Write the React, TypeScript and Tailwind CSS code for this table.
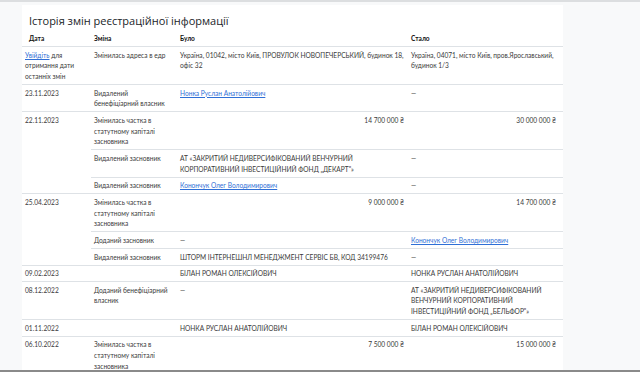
import React from 'react'

type Sub = { change: string; was: React.ReactNode; now: React.ReactNode; wasRight?: boolean; nowRight?: boolean }
type Row = { date: React.ReactNode; subs: Sub[] }

const Link = ({ children }: { children: React.ReactNode }) => (
  <a className="text-[#2f6fd6] underline underline-offset-1">{children}</a>
)

const DASH = '—'

const rows: Row[] = [
  {
    date: <><Link>Увійдіть</Link> для отримання дати останніх змін</>,
    subs: [{
      change: 'Змінилась адреса в едр',
      was: 'Україна, 01042, місто Київ, ПРОВУЛОК НОВОПЕЧЕРСЬКИЙ, будинок 18, офіс 32',
      now: 'Україна, 04071, місто Київ, пров.Ярославський, будинок 1/3',
    }],
  },
  {
    date: '23.11.2023',
    subs: [{ change: 'Видалений бенефіціарний власник', was: <Link>Нонка Руслан Анатолійович</Link>, now: DASH }],
  },
  {
    date: '22.11.2023',
    subs: [
      { change: 'Змінилась частка в статутному капіталі засновника', was: '14 700 000 ₴', now: '30 000 000 ₴', wasRight: true, nowRight: true },
      { change: 'Видалений засновник', was: 'АТ «ЗАКРИТИЙ НЕДИВЕРСИФІКОВАНИЙ ВЕНЧУРНИЙ КОРПОРАТИВНИЙ ІНВЕСТИЦІЙНИЙ ФОНД „ДЕКАРТ"»', now: DASH },
      { change: 'Видалений засновник', was: <Link>Конончук Олег Володимирович</Link>, now: DASH },
    ],
  },
  {
    date: '25.04.2023',
    subs: [
      { change: 'Змінилась частка в статутному капіталі засновника', was: '9 000 000 ₴', now: '14 700 000 ₴', wasRight: true, nowRight: true },
      { change: 'Доданий засновник', was: DASH, now: <Link>Конончук Олег Володимирович</Link> },
      { change: 'Видалений засновник', was: 'ШТОРМ ІНТЕРНЕШНЛ МЕНЕДЖМЕНТ СЕРВІС БВ, КОД 34199476', now: DASH },
    ],
  },
  { date: '09.02.2023', subs: [{ change: '', was: 'БІЛАН РОМАН ОЛЕКСІЙОВИЧ', now: 'НОНКА РУСЛАН АНАТОЛІЙОВИЧ' }] },
  {
    date: '08.12.2022',
    subs: [{ change: 'Доданий бенефіціарний власник', was: DASH, now: 'АТ «ЗАКРИТИЙ НЕДИВЕРСИФІКОВАНИЙ ВЕНЧУРНИЙ КОРПОРАТИВНИЙ ІНВЕСТИЦІЙНИЙ ФОНД „БЕЛЬФОР"»' }],
  },
  { date: '01.11.2022', subs: [{ change: '', was: 'НОНКА РУСЛАН АНАТОЛІЙОВИЧ', now: 'БІЛАН РОМАН ОЛЕКСІЙОВИЧ' }] },
  {
    date: '06.10.2022',
    subs: [{ change: 'Змінилась частка в статутному капіталі засновника', was: '7 500 000 ₴', now: '15 000 000 ₴', wasRight: true, nowRight: true }],
  },
]

export default function App(){
  const td = 'align-top py-[2.5px] pl-[3px] border-b border-[#dee2e6]'
  return (
    <div className="h-[372px] overflow-hidden bg-[#f8f9fa] border-t-2 border-[#dcdee0] relative">
      <div className="ml-[22px] mt-[3px] w-[541px] bg-white pt-[8px]">
        <h2 className="pl-[7px] text-[11px] leading-[15px] text-[#212529] mb-[2.5px] font-['Open_Sans',sans-serif]">Історія змін реєстраційної інформації</h2>
        <table className="w-full table-fixed border-collapse text-[6.6px] leading-[10.65px] text-[#3a3a3a] font-['Lato','Noto_Sans',sans-serif]">
          <colgroup>
            <col className="w-[69px]" />
            <col className="w-[86px]" />
            <col className="w-[231px]" />
            <col className="w-[155px]" />
          </colgroup>
          <thead>
            <tr className="text-left font-bold text-[#111]">
              <th className={`${td} pl-[7px]`}>Дата</th>
              <th className={td}>Зміна</th>
              <th className={td}>Було</th>
              <th className={td}>Стало</th>
            </tr>
          </thead>
          <tbody>
            {rows.map((r, i) => r.subs.map((s, j) => (
              <tr key={`${i}-${j}`}>
                {j === 0 && <td rowSpan={r.subs.length} className={`${td} pr-[4px]`}>{r.date}</td>}
                <td className={`${td} pr-[4px]`}>{s.change}</td>
                <td className={`${td} pr-[4px] ${s.wasRight ? 'text-right' : ''}`}>{s.was}</td>
                <td className={`${td} pr-[7px] ${s.nowRight ? 'text-right' : ''}`}>{s.now}</td>
              </tr>
            )))}
          </tbody>
        </table>
      </div>
      <div className="absolute left-0 right-0 bottom-0 h-[2px] bg-[#8a8a8a]" />
    </div>
  )
}
